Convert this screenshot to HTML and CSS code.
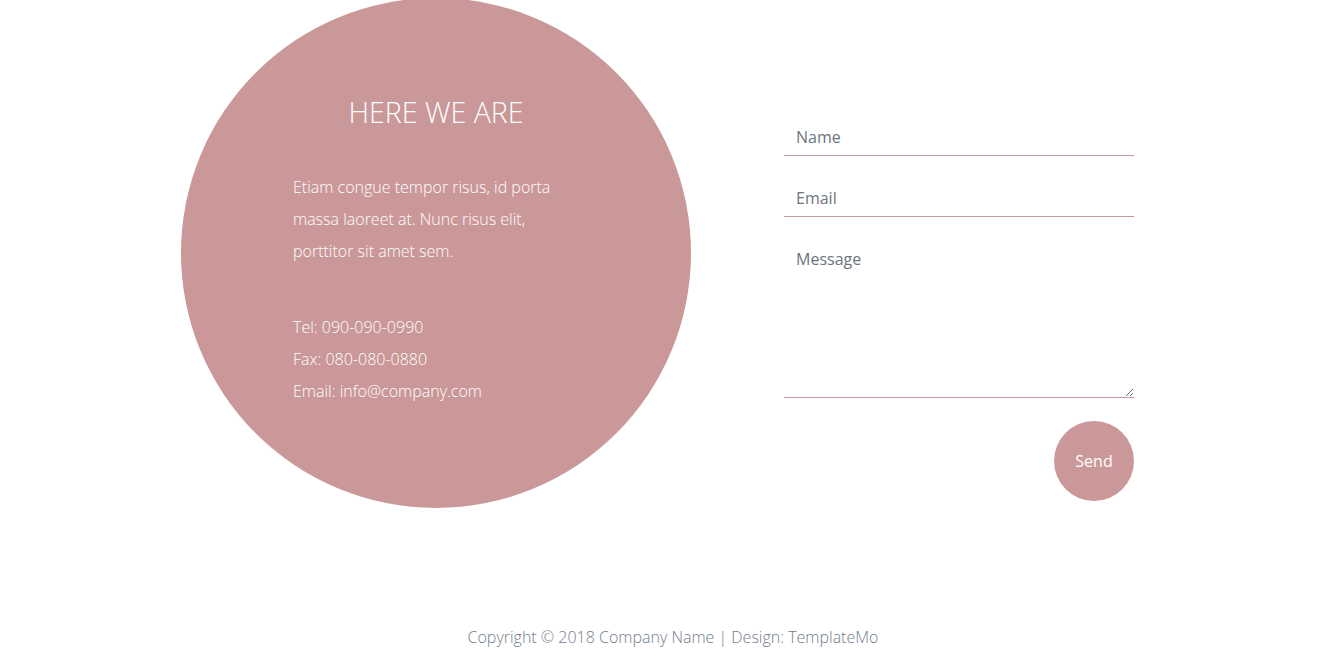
FILE: index.html
```html
<!DOCTYPE html>
<html>
<head>
<meta charset="utf-8">
<link rel="stylesheet" href="styles.css">
</head>
<body>
<section class="contact">
  <div class="circle">
    <h2 class="title">HERE WE ARE</h2>
    <p class="intro">Etiam congue tempor risus, id porta massa laoreet at. Nunc risus elit, porttitor sit amet sem.</p>
    <ul class="info">
      <li>Tel: 090-090-0990</li>
      <li>Fax: 080-080-0880</li>
      <li>Email: info@company.com</li>
    </ul>
  </div>
  <form class="form">
    <input class="field" type="text" placeholder="Name">
    <input class="field" type="email" placeholder="Email">
    <textarea class="field area" placeholder="Message"></textarea>
    <div class="actions"><button class="send" type="button">Send</button></div>
  </form>
</section>
<footer class="footer">Copyright © 2018 Company Name | Design: TemplateMo</footer>
</body>
</html>
```
FILE: styles.css
```css
* { box-sizing: border-box; }
html, body { margin: 0; padding: 0; }
body {
  font-family: "Open Sans", "Liberation Sans", sans-serif;
  background: #fff;
  height: 661px;
  overflow: hidden;
}
.contact {
  display: flex;
  align-items: flex-start;
  padding-left: 181px;
  margin-top: -2px;
  gap: 93px;
}
.circle {
  width: 510px;
  height: 510px;
  border-radius: 50%;
  background: #ca9898;
  color: #fff;
  padding: 94px 112px 0 112px;
  flex-shrink: 0;
}
.title {
  margin: 0;
  font-weight: 300;
  font-size: 28.6px;
  line-height: 40px;
  text-align: center;
}
.intro {
  margin: 39px 0 0 0;
  font-weight: 300;
  font-size: 16px;
  line-height: 32px;
}
.info {
  list-style: none;
  margin: 44px 0 0 0;
  padding: 0;
  font-weight: 300;
  font-size: 16px;
  line-height: 32px;
}
.form {
  width: 350px;
  padding-top: 120px;
  display: flex;
  flex-direction: column;
}
.field {
  display: block;
  width: 100%;
  height: 38px;
  border: 0;
  border-bottom: 1px solid #ca9898;
  padding: 6px 12px;
  font-family: "Open Sans", "Liberation Sans", sans-serif;
  font-size: 16px;
  line-height: 24px;
  color: #495057;
  background: transparent;
  margin-bottom: 23px;
  outline: none;
}
.field::placeholder { color: #6c757d; opacity: 1; }
.area {
  height: 157px;
  margin-top: 1px;
  margin-bottom: 23px;
  resize: vertical;
}
.actions {
  display: flex;
  justify-content: flex-end;
}
.send {
  width: 80px;
  height: 80px;
  border-radius: 50%;
  border: 0;
  background: #ca9898;
  color: #fff;
  font-family: "Open Sans", "Liberation Sans", sans-serif;
  font-size: 16px;
  padding: 0;
}
.footer {
  margin-top: 117px;
  padding-left: 2px;
  text-align: center;
  font-weight: 300;
  font-size: 16px;
  line-height: 24px;
  color: #747d8c;
}
```
